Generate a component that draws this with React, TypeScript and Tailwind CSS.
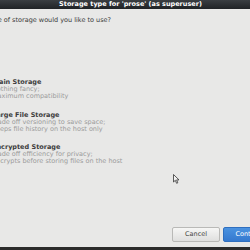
import React from "react";

interface StorageOption {
  title: string;
  lines: string[];
}

const options: StorageOption[] = [
  { title: "Plain Storage", lines: ["Nothing fancy;", "Maximum compatibility"] },
  {
    title: "Large File Storage",
    lines: ["Trade off versioning to save space;", "Keeps file history on the host only"],
  },
  {
    title: "Encrypted Storage",
    lines: ["Trade off efficiency for privacy;", "Encrypts before storing files on the host"],
  },
];

const App: React.FC = () => {
  return (
    <div
      className="relative w-[250px] h-[250px] overflow-hidden bg-[#e8e8e7]"
      style={{ fontFamily: '"DejaVu Sans", Verdana, sans-serif' }}
    >
      <div className="ml-[-32px] w-[309px] h-[247px] flex flex-col">
        {/* barra de título */}
        <div className="h-[9px] bg-gradient-to-b from-[#3a3e42] to-[#202326] flex items-center justify-center pl-[16px]">
          <span className="text-[6.5px] leading-[9px] font-bold text-white whitespace-nowrap">
            Storage type for 'prose' (as superuser)
          </span>
        </div>

        <div className="flex-1 flex flex-col pt-[8px]">
          <p className="text-[6.5px] leading-[7px] text-[#3a3a3a] whitespace-nowrap">
            What type of storage would you like to use?
          </p>

          <div className="flex flex-col gap-[11.5px] mt-[55px] pl-[24px]">
            {options.map((opt) => (
              <div key={opt.title} className="flex flex-col">
                <span className="text-[6.5px] leading-[7px] font-bold text-[#3c3c3c] whitespace-nowrap">
                  {opt.title}
                </span>
                {opt.lines.map((line) => (
                  <span key={line} className="text-[6.5px] leading-[7px] text-[#9b9b9b] whitespace-nowrap">
                    {line}
                  </span>
                ))}
              </div>
            ))}
          </div>

          <div className="mt-auto mb-[5px] flex justify-end gap-[3px]">
            <button className="w-[48px] h-[15px] rounded-[2px] border border-[#b9b9b7] bg-gradient-to-b from-[#f6f6f5] to-[#dfdfde] text-[6.5px] text-[#444]">
              Cancel
            </button>
            <button className="w-[54px] h-[15px] rounded-[2px] border border-[#2f6fbf] bg-gradient-to-b from-[#4a92e0] to-[#3579cf] text-[6.5px] text-white">
              Continue
            </button>
          </div>
        </div>
      </div>
      <div className="h-[3px] bg-[#2b2b2b]" />

      {/* cursor del ratón */}
      <svg className="absolute left-[173px] top-[174px]" width="7" height="10" viewBox="0 0 7 10">
        <path d="M0.5 0.5 L0.5 8 L2.3 6.3 L3.6 9.3 L4.8 8.8 L3.6 5.9 L6 5.9 Z" fill="#f2f2f2" stroke="#333" strokeWidth="0.8" />
      </svg>
    </div>
  );
};

export default App;
